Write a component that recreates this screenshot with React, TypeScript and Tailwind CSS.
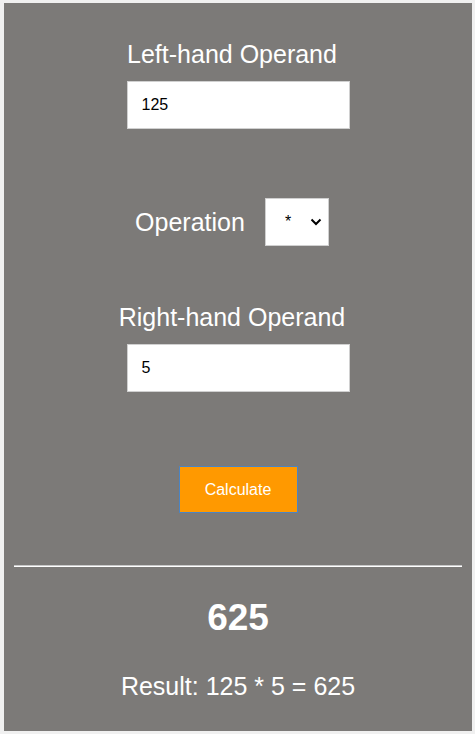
import { useState } from "react";

export default function App() {
  const [left, setLeft] = useState("125");
  const [op, setOp] = useState("*");
  const [right, setRight] = useState("5");
  const [result] = useState({ a: 125, op: "*", b: 5, value: 625 });

  return (
    <div className="min-h-screen bg-[#f0f0f0] pt-[3px] pl-[4px] pr-[3px] pb-[3px] font-['Liberation_Sans',Arial,sans-serif]">
      <div className="h-[728px] bg-[#7c7a78] pt-[37px] text-white">
        {/* Left operand */}
        <label className="block pr-3 text-center text-[25px] leading-[29px]">
          Left-hand Operand
        </label>
        <input
          value={left}
          onChange={(e) => setLeft(e.target.value)}
          className="mx-auto mt-3 block h-12 w-[223px] border border-[#d0d0d0] bg-white px-[14px] text-base text-black outline-none"
        />

        {/* Operation */}
        <div className="mt-[69px] flex items-center justify-center gap-5 pr-3">
          <span className="text-[25px] leading-[29px]">Operation</span>
          <div className="relative h-12 w-16">
            <select
              value={op}
              onChange={(e) => setOp(e.target.value)}
              className="h-full w-full appearance-none border border-[#d0d0d0] bg-white pl-[19px] text-base text-black outline-none"
            >
              <option value="+">+</option>
              <option value="-">-</option>
              <option value="*">*</option>
              <option value="/">/</option>
            </select>
            <svg
              className="pointer-events-none absolute left-[45px] top-[20px]"
              width="12"
              height="8"
              viewBox="0 0 12 8"
            >
              <path d="M1.5 1.5 L6 6 L10.5 1.5" fill="none" stroke="#000" strokeWidth="2" />
            </svg>
          </div>
        </div>

        {/* Right operand */}
        <label className="mt-[57px] block pr-3 text-center text-[25px] leading-[29px]">
          Right-hand Operand
        </label>
        <input
          value={right}
          onChange={(e) => setRight(e.target.value)}
          className="mx-auto mt-3 block h-12 w-[223px] border border-[#d0d0d0] bg-white px-[14px] text-base text-black outline-none"
        />

        <button className="mx-auto mt-[74px] block h-[47px] w-[119px] border border-[#4a84c4] bg-[#ff9900] text-base text-white">
          Calculate
        </button>

        <div className="mx-[10px] mt-[52px] border-t border-b border-t-[#c8c8c8] border-b-white" />

        <div className="mt-[29px] text-center text-[37px] font-bold leading-[43px]">{result.value}</div>
        <div className="mt-[33px] text-center text-[25px] leading-[29px]">
          Result: {result.a} {result.op} {result.b} = {result.value}
        </div>
      </div>
    </div>
  );
}
